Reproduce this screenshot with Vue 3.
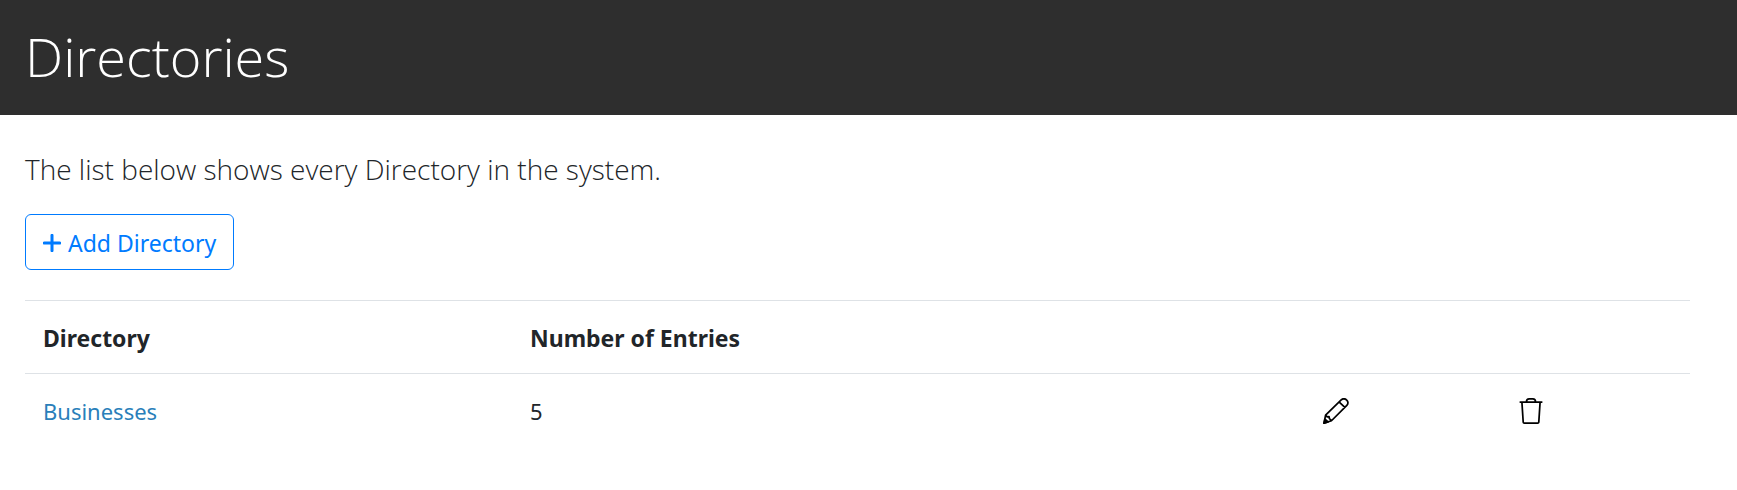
<script setup>
const directories = [{ name: 'Businesses', entries: 5 }]
</script>

<template>
  <header class="banner">
    <h1>Directories</h1>
  </header>
  <main class="content">
    <p class="lead">The list below shows every Directory in the system.</p>
    <button type="button" class="add">
      <svg class="plus" viewBox="0 0 18 18" aria-hidden="true">
        <path d="M9 1.3v15.4M1.3 9h15.4" />
      </svg>
      Add Directory
    </button>
    <table>
      <colgroup>
        <col class="name-col" />
        <col class="count-col" />
        <col class="edit-col" />
        <col />
      </colgroup>
      <thead>
        <tr>
          <th scope="col">Directory</th>
          <th scope="col">Number of Entries</th>
          <td></td>
          <td></td>
        </tr>
      </thead>
      <tbody>
        <tr v-for="directory in directories" :key="directory.name">
          <td><a href="#">{{ directory.name }}</a></td>
          <td>{{ directory.entries }}</td>
          <td>
            <button type="button" class="icon" :aria-label="`Edit ${directory.name}`">
              <svg viewBox="0 0 24 24" aria-hidden="true">
                <path d="M2.4 15.8 16.8 1.8C18.2.5 20.4.5 21.9 1.9s1.5 3.6.1 5L7.8 21 .9 23.2Z M15 3.7l5.2 5M2.4 15.8l1.5 1.6 1.7-.2.3 1.7 1.9 2.1" />
                <path class="lead-tip" d="M1.8 19.6.9 23.2l3.8-1.2Z" />
              </svg>
            </button>
          </td>
          <td>
            <button type="button" class="icon" :aria-label="`Delete ${directory.name}`">
              <svg viewBox="0 0 24 24" aria-hidden="true">
                <path d="M1.5 3.8h21M3.6 3.8l1.2 18.4q.1.9 1 .9h12.4q.9 0 1-.9L20.4 3.8M7.8 3.8q0-2.9 2.5-2.9h3.4q2.5 0 2.5 2.9" />
              </svg>
            </button>
          </td>
        </tr>
      </tbody>
    </table>
  </main>
</template>

<style>
body {
  margin: 0;
  background: #fff;
}
</style>

<style scoped>
.banner,
.content {
  font-family: "Open Sans", "Noto Sans", sans-serif;
  color: #212529;
}

.banner {
  padding: 20px 25px 23px;
  background: #2e2e2e;
  color: #fff;
}

h1 {
  margin: 0;
  font-size: 54px;
  font-weight: 300;
  line-height: 72px;
}

.content {
  padding: 32px 47px 32px 25px;
  font-family: "Noto Sans", "Open Sans", sans-serif;
  font-size: 23px;
  line-height: 36px;
}

.lead {
  margin: 0 0 22px;
  font-family: "Open Sans", "Noto Sans", sans-serif;
  font-size: 28px;
  font-weight: 300;
  line-height: 45px;
}

.add {
  display: flex;
  align-items: center;
  gap: 7px;
  margin: 0 0 30px;
  padding: 10px 17px 8px;
  border: 1px solid #007bff;
  border-radius: 6px;
  background: transparent;
  color: #007bff;
  font: inherit;
  cursor: pointer;
}

.plus {
  width: 18px;
  height: 18px;
  fill: none;
  stroke: currentColor;
  stroke-width: 3;
  stroke-linecap: round;
}

table {
  width: 100%;
  table-layout: fixed;
  border-collapse: separate;
  border-spacing: 0;
}

.name-col {
  width: 29.25%;
}

.count-col {
  width: 47.6%;
}

.edit-col {
  width: 11.75%;
}

th,
td {
  padding: 19px 18px 17px;
  border-top: 1px solid #dee2e6;
  text-align: left;
}

th {
  font-weight: 700;
}

td {
  font-size: 22px;
}

a {
  color: #2a7fba;
  text-decoration: none;
}

.icon {
  display: block;
  padding: 0;
  border: 0;
  background: transparent;
  color: #000;
  cursor: pointer;
}

.icon svg {
  display: block;
  width: 26px;
  height: 26px;
  fill: none;
  stroke: currentColor;
  stroke-width: 1.6;
  stroke-linejoin: round;
}

.icon .lead-tip {
  fill: currentColor;
}
</style>
